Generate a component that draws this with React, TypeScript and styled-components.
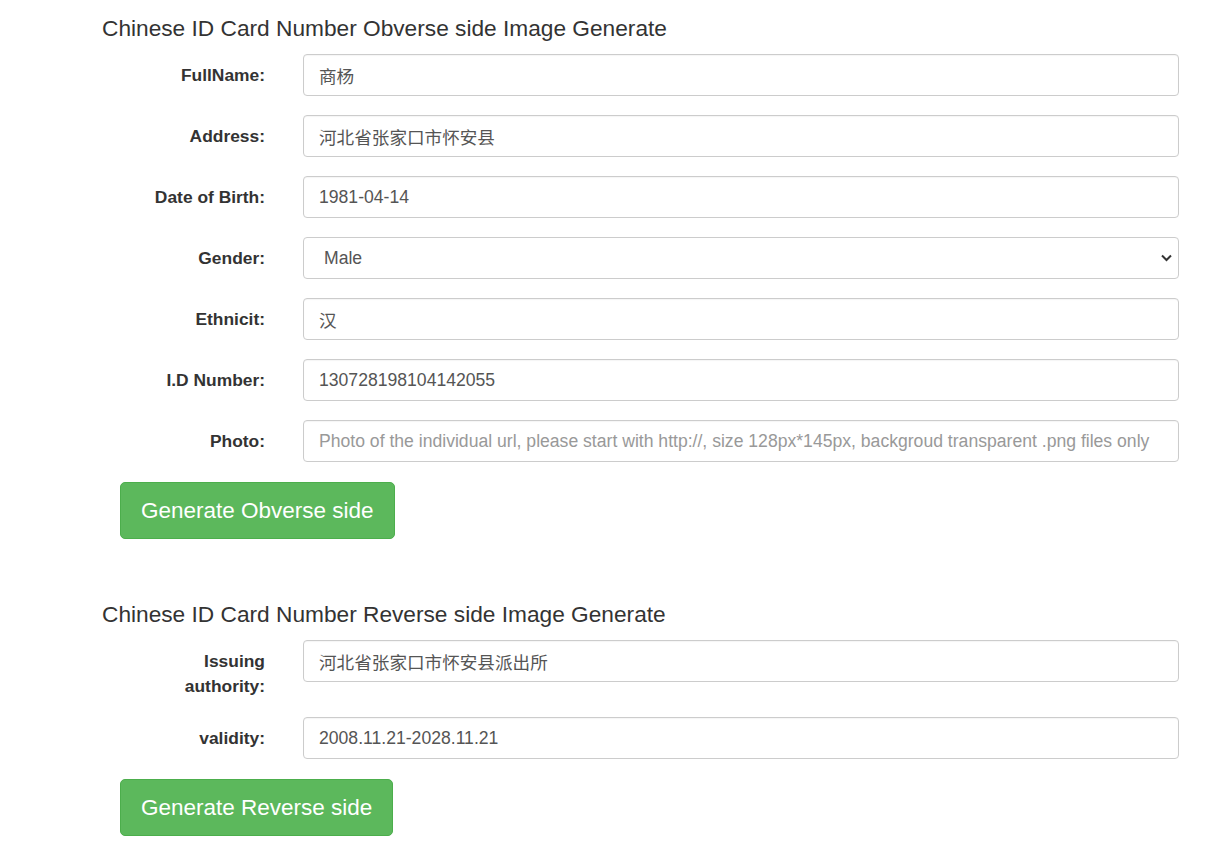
import React from 'react';
import styled, { createGlobalStyle } from 'styled-components';

const GlobalStyle = createGlobalStyle`
  html, body {
    margin: 0;
    padding: 0;
    background: #fff;
  }
  body {
    font-family: Arial, "Liberation Sans", "Noto Sans CJK SC", sans-serif;
    color: #333;
  }
  * {
    box-sizing: border-box;
  }
`;

const Page = styled.div`
  padding: 15px 34px 0 102px;
`;

const Section = styled.form`
  display: flex;
  flex-direction: column;
  margin-bottom: 62px;
`;

const Title = styled.h3`
  margin: 0 0 13px;
  font-size: 22.7px;
  font-weight: 400;
  line-height: 26px;
  color: #333;
`;

const Group = styled.div`
  display: grid;
  grid-template-columns: 201px 1fr;
  align-items: start;
  margin-bottom: 19px;
`;

const Label = styled.label`
  padding: 9px 38px 0 33px;
  text-align: right;
  font-size: 17.4px;
  font-weight: 700;
  line-height: 24.5px;
  color: #333;
`;

const Input = styled.input`
  display: block;
  width: 100%;
  height: 42px;
  padding: 0 15px;
  font-family: inherit;
  font-size: 17.6px;
  color: #555;
  background: #fff;
  border: 1px solid #ccc;
  border-radius: 4px;
  box-shadow: inset 0 1px 1px rgba(0, 0, 0, 0.04);
  outline: none;

  &::placeholder {
    color: #999;
  }
`;

const SelectWrap = styled.div`
  position: relative;
`;

const Select = styled.select`
  display: block;
  width: 100%;
  height: 42px;
  padding: 0 30px 0 20px;
  font-family: inherit;
  font-size: 17.6px;
  color: #555;
  background: #fff;
  border: 1px solid #ccc;
  border-radius: 4px;
  appearance: none;
  outline: none;
`;

const Chevron = styled.svg`
  position: absolute;
  right: 7px;
  top: 17px;
  pointer-events: none;
`;

const Button = styled.button`
  align-self: flex-start;
  margin: 1px 0 0 18px;
  padding: 15px 20px;
  font-family: inherit;
  font-size: 22.5px;
  line-height: 25px;
  color: #fff;
  background: #5cb85c;
  border: 1px solid #4cae4c;
  border-radius: 5px;
  cursor: pointer;
`;

const TextRow = ({ label, value, placeholder }: { label: string; value?: string; placeholder?: string }) => (
  <Group>
    <Label>{label}</Label>
    <Input defaultValue={value} placeholder={placeholder} />
  </Group>
);

const App: React.FC = () => {
  return (
    <Page>
      <GlobalStyle />
      <Section onSubmit={e => e.preventDefault()}>
        <Title>Chinese ID Card Number Obverse side Image Generate</Title>
        <TextRow label="FullName:" value="商杨" />
        <TextRow label="Address:" value="河北省张家口市怀安县" />
        <TextRow label="Date of Birth:" value="1981-04-14" />
        <Group>
          <Label>Gender:</Label>
          <SelectWrap>
            <Select defaultValue="Male">
              <option value="Male">Male</option>
              <option value="Female">Female</option>
            </Select>
            <Chevron width="11" height="8" viewBox="0 0 11 8">
              <path d="M1 1.5 L5.5 6 L10 1.5" fill="none" stroke="#333" strokeWidth="2" />
            </Chevron>
          </SelectWrap>
        </Group>
        <TextRow label="Ethnicit:" value="汉" />
        <TextRow label="I.D Number:" value="130728198104142055" />
        <TextRow
          label="Photo:"
          placeholder="Photo of the individual url, please start with http://, size 128px*145px, backgroud transparent .png files only"
        />
        <Button type="submit">Generate Obverse side</Button>
      </Section>

      <Section onSubmit={e => e.preventDefault()}>
        <Title>Chinese ID Card Number Reverse side Image Generate</Title>
        <TextRow label="Issuing authority:" value="河北省张家口市怀安县派出所" />
        <TextRow label="validity:" value="2008.11.21-2028.11.21" />
        <Button type="submit">Generate Reverse side</Button>
      </Section>
    </Page>
  );
};

export default App;
